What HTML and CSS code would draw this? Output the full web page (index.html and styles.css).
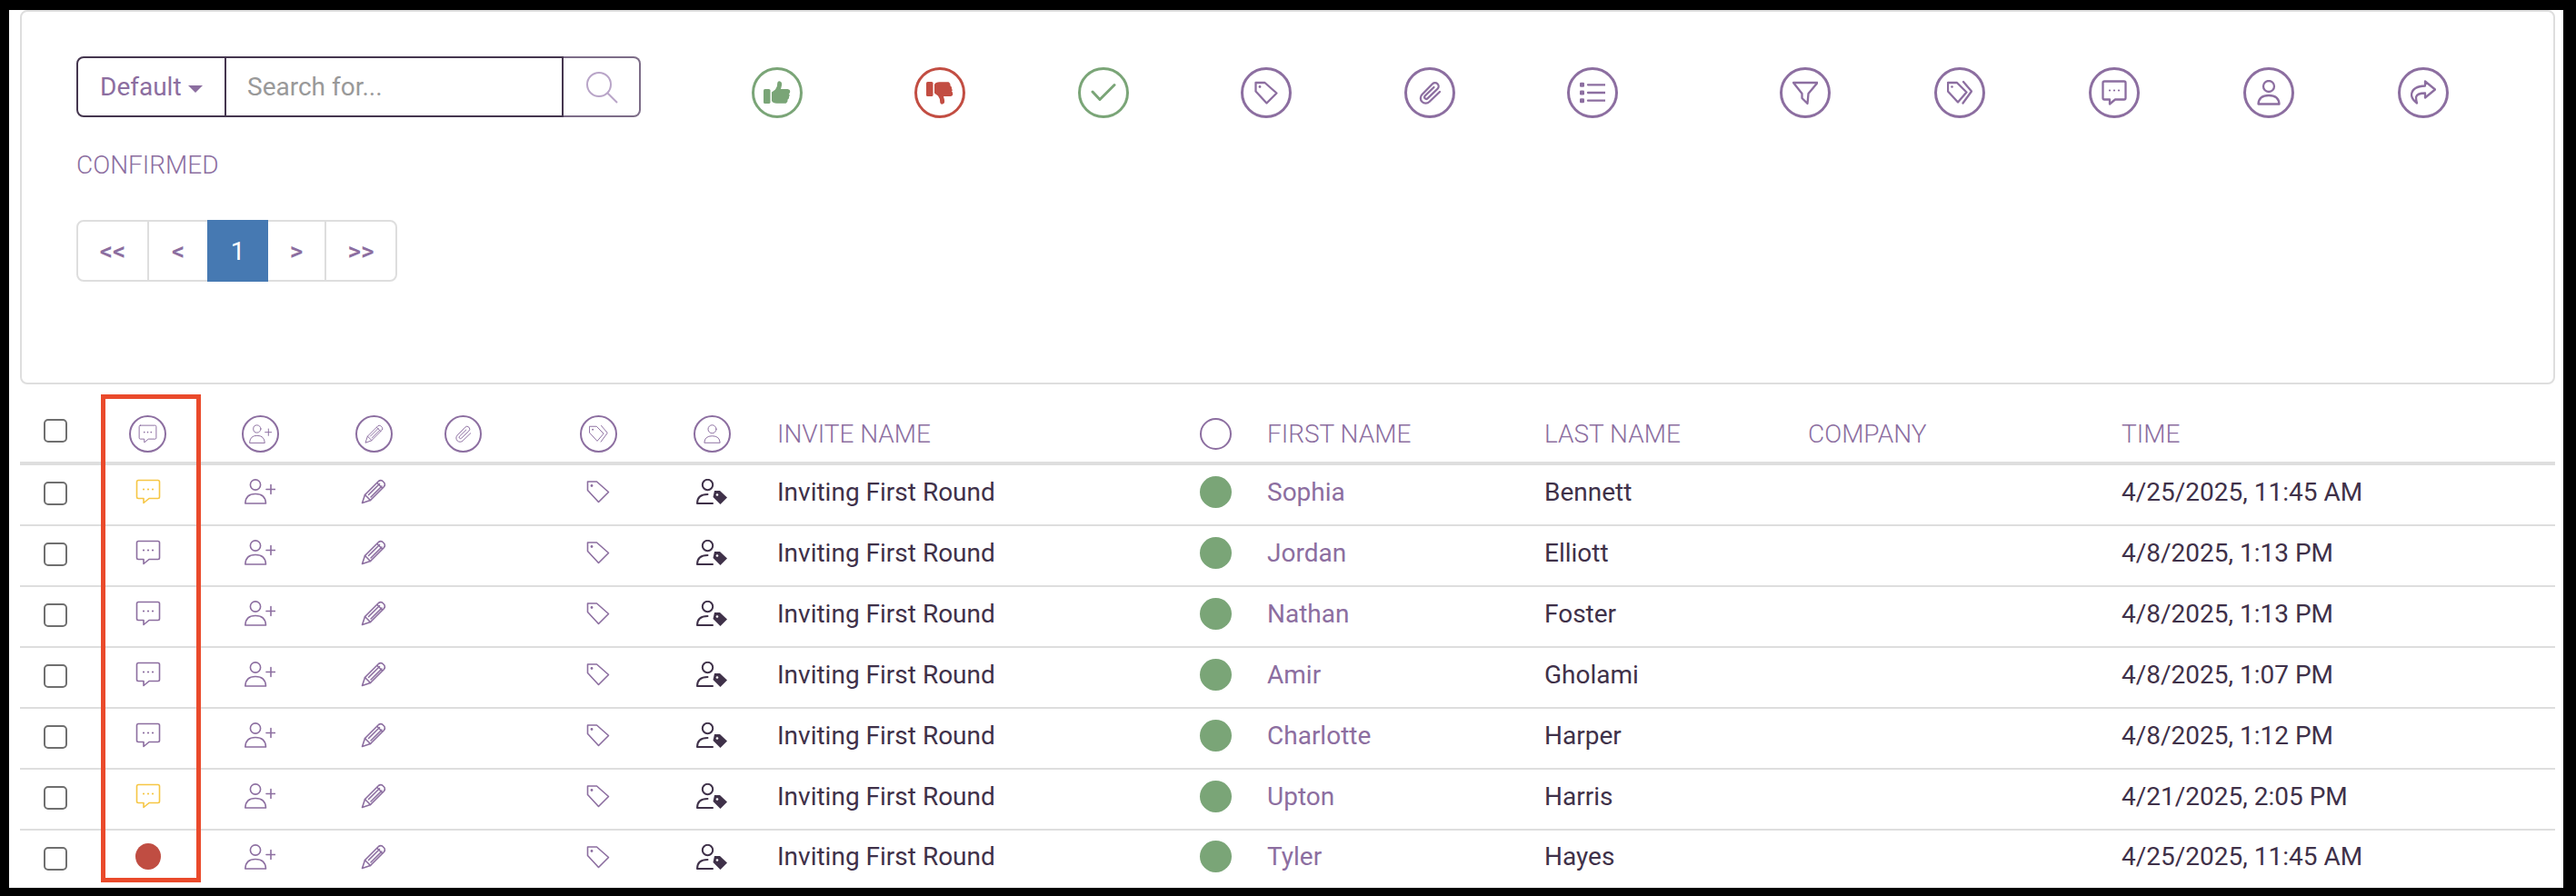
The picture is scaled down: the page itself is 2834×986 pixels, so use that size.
FILE: index.html
```html
<!DOCTYPE html>
<html lang="en">
<head>
<meta charset="utf-8">
<title>Confirmed invites</title>
<link rel="stylesheet" href="styles.css">
</head>
<body>
<svg class="defs" aria-hidden="true">
  <symbol id="i-thumb" viewBox="0 0 30 26"><rect class="f" x="0" y="9" width="7.5" height="16" rx="1.6"/><path class="f" d="M9 12.5 L13 9.5 Q15.5 6.5 15.3 2 Q15.8 0 18 .4 Q20.6 1 20 5 L19 9 H26.5 Q29.6 9.5 29.2 12 Q29.2 13.6 28 14.2 Q29.6 15.8 28 17.6 Q28.6 19.6 26.6 20.6 Q27 23.6 24.6 24.8 H14.5 Q10.3 24.8 9 22 Z"/></symbol>
  <symbol id="i-thumbdown" viewBox="0 0 30 26"><g transform="matrix(1 0 0 -1 0 26)"><rect class="f" x="0" y="9" width="7.5" height="16" rx="1.6"/><path class="f" d="M9 12.5 L13 9.5 Q15.5 6.5 15.3 2 Q15.8 0 18 .4 Q20.6 1 20 5 L19 9 H26.5 Q29.6 9.5 29.2 12 Q29.2 13.6 28 14.2 Q29.6 15.8 28 17.6 Q28.6 19.6 26.6 20.6 Q27 23.6 24.6 24.8 H14.5 Q10.3 24.8 9 22 Z"/></g></symbol>
  <symbol id="i-check" viewBox="0 0 28 28"><path d="M2 13 L10 21.5 L26 5.5"/></symbol>
  <symbol id="i-tag" viewBox="0 0 28 28"><path d="M2.5 3 H12.5 L25.5 14.5 L14.5 25.5 L2.5 12.5 Z"/><circle class="f" cx="7" cy="7.5" r="1.4"/></symbol>
  <symbol id="i-clip" viewBox="0 0 28 28"><path d="M25 13 L13.5 24 a5.6 5.6 0 0 1 -8 -8 L17 4.2 a3.8 3.8 0 0 1 5.5 5.5 L11.5 20.3 a1.9 1.9 0 0 1 -2.8 -2.8 L18.5 8"/></symbol>
  <symbol id="i-list" viewBox="0 0 28 28"><rect class="f" x="0" y="2.8" width="5" height="5" rx="1.2"/><rect class="f" x="0" y="11.5" width="5" height="5" rx="1.2"/><rect class="f" x="0" y="20.2" width="5" height="5" rx="1.2"/><path d="M9 5.3 H28 M9 14 H28 M9 22.7 H28"/></symbol>
  <symbol id="i-filter" viewBox="0 0 28 28"><path d="M1 3 H27.5 L17.5 15 L16.5 26 L10.5 20 V15 Z"/></symbol>
  <symbol id="i-tags" viewBox="0 0 28 28"><path d="M1 3 H11 L21.5 13.5 L12 24.5 L1 12.5 Z"/><circle class="f" cx="5.5" cy="7.5" r="1.3"/><path d="M18 2 L27 12.5 L17.5 25.5"/></symbol>
  <symbol id="i-comment" viewBox="0 0 28 28"><path d="M3.2 1.5 H24.8 Q26.5 1.5 26.5 3.2 V19.8 Q26.5 21.5 24.8 21.5 H15 L9 26.5 V21.5 H3.2 Q1.5 21.5 1.5 19.8 V3.2 Q1.5 1.5 3.2 1.5 Z"/><circle class="f" cx="9" cy="11.5" r="1.1"/><circle class="f" cx="14" cy="11.5" r="1.1"/><circle class="f" cx="19" cy="11.5" r="1.1"/></symbol>
  <symbol id="i-person" viewBox="0 0 28 28"><circle cx="14" cy="7" r="6"/><path d="M2.5 26.5 Q3 17 14 17 Q25 17 25.5 26.5 Z"/></symbol>
  <symbol id="i-share" viewBox="0 0 28 28"><path d="M16 1.5 L27 10.5 L16 19.5 V14.5 Q7 14.5 6 19 Q6 22 7 25.5 Q1 21 1 16 Q2 7 16 6.5 Z"/></symbol>
  <symbol id="i-personplus" viewBox="0 0 34 28"><circle cx="12" cy="6.5" r="5.6"/><path d="M.8 27 Q1.2 16.5 12 16.5 Q23 16.5 23.5 27 Z"/><path d="M24 11.5 H34 M29 6.5 V16.5"/></symbol>
  <symbol id="i-pencil" viewBox="0 0 28 28"><path d="M1.5 26.5 L4.5 17.5 L19.5 2.5 Q21.5 1 23.5 2 L26 4.5 Q27 6.5 25.5 8.5 L10.5 23.5 Z"/><path d="M4.5 17.5 L10.5 23.5 M8.5 17.5 L20.5 5.5 M11 20 L23 8 M18 4.5 L23.5 10"/></symbol>
  <symbol id="i-persontag" viewBox="0 0 34 28"><circle cx="12.5" cy="6.5" r="5.7"/><path d="M18 27 H1 Q1 17 12.5 17"/><path class="f" d="M20 13 H26 L34 20.5 L26.5 28 L18.5 20 Z"/><circle class="w" cx="23" cy="17.5" r="1.3"/></symbol>
</svg>

<div class="frame">
  <section class="card">
    <div class="toolbar">
      <div class="search">
        <button class="search-type" type="button">Default<span class="caret"></span></button>
        <input class="search-input" type="text" placeholder="Search for...">
        <button class="search-go" type="button" aria-label="Search">
          <svg class="search-ico" viewBox="0 0 36 36"><circle cx="15" cy="15" r="13"/><path d="M24.5 24.5 L35 35"/></svg>
        </button>
      </div>
      <div class="actions actions-a">
        <span class="ring ring-green"><svg class="glyph glyph-thumb"><use href="#i-thumb"/></svg></span>
        <span class="ring ring-red"><svg class="glyph glyph-thumb"><use href="#i-thumbdown"/></svg></span>
        <span class="ring ring-green"><svg class="glyph glyph-check"><use href="#i-check"/></svg></span>
        <span class="ring"><svg class="glyph"><use href="#i-tag"/></svg></span>
        <span class="ring"><svg class="glyph"><use href="#i-clip"/></svg></span>
        <span class="ring"><svg class="glyph"><use href="#i-list"/></svg></span>
      </div>
      <div class="actions actions-b">
        <span class="ring"><svg class="glyph"><use href="#i-filter"/></svg></span>
        <span class="ring"><svg class="glyph"><use href="#i-tags"/></svg></span>
        <span class="ring"><svg class="glyph"><use href="#i-comment"/></svg></span>
        <span class="ring"><svg class="glyph"><use href="#i-person"/></svg></span>
        <span class="ring"><svg class="glyph"><use href="#i-share"/></svg></span>
      </div>
    </div>
    <div class="status-label">CONFIRMED</div>
    <nav class="pager">
      <a class="page page-first">&lt;&lt;</a>
      <a class="page page-prev">&lt;</a>
      <a class="page page-current">1</a>
      <a class="page page-next">&gt;</a>
      <a class="page page-last">&gt;&gt;</a>
    </nav>
  </section>

  <section class="table">
    <div class="highlight"></div>
    <div class="row head">
      <div class="c c-check"><input class="check" type="checkbox"></div>
      <div class="c"><span class="ring ring-small"><svg class="mini"><use href="#i-comment"/></svg></span></div>
      <div class="c"><span class="ring ring-small"><svg class="mini mini-wide"><use href="#i-personplus"/></svg></span></div>
      <div class="c"><span class="ring ring-small"><svg class="mini"><use href="#i-pencil"/></svg></span></div>
      <div class="c"><span class="ring ring-small"><svg class="mini"><use href="#i-clip"/></svg></span></div>
      <div class="c"><span class="ring ring-small"><svg class="mini"><use href="#i-tags"/></svg></span></div>
      <div class="c"><span class="ring ring-small"><svg class="mini"><use href="#i-person"/></svg></span></div>
      <div class="c c-text c-invite">INVITE NAME</div>
      <div class="c"><span class="ring-empty"></span></div>
      <div class="c c-text c-first">FIRST NAME</div>
      <div class="c c-text">LAST NAME</div>
      <div class="c c-text">COMPANY</div>
      <div class="c c-text">TIME</div>
    </div>

    <div class="row">
      <div class="c c-check"><input class="check" type="checkbox"></div>
      <div class="c"><svg class="ico ico-yellow"><use href="#i-comment"/></svg></div>
      <div class="c"><svg class="ico ico-wide"><use href="#i-personplus"/></svg></div>
      <div class="c"><svg class="ico"><use href="#i-pencil"/></svg></div>
      <div class="c"></div>
      <div class="c"><svg class="ico"><use href="#i-tag"/></svg></div>
      <div class="c"><svg class="ico ico-wide ico-dark"><use href="#i-persontag"/></svg></div>
      <div class="c c-text c-invite">Inviting First Round</div>
      <div class="c"><span class="dot dot-green"></span></div>
      <div class="c c-text c-first"><a class="link">Sophia</a></div>
      <div class="c c-text">Bennett</div>
      <div class="c c-text"></div>
      <div class="c c-text">4/25/2025, 11:45 AM</div>
    </div>
    <div class="row">
      <div class="c c-check"><input class="check" type="checkbox"></div>
      <div class="c"><svg class="ico"><use href="#i-comment"/></svg></div>
      <div class="c"><svg class="ico ico-wide"><use href="#i-personplus"/></svg></div>
      <div class="c"><svg class="ico"><use href="#i-pencil"/></svg></div>
      <div class="c"></div>
      <div class="c"><svg class="ico"><use href="#i-tag"/></svg></div>
      <div class="c"><svg class="ico ico-wide ico-dark"><use href="#i-persontag"/></svg></div>
      <div class="c c-text c-invite">Inviting First Round</div>
      <div class="c"><span class="dot dot-green"></span></div>
      <div class="c c-text c-first"><a class="link">Jordan</a></div>
      <div class="c c-text">Elliott</div>
      <div class="c c-text"></div>
      <div class="c c-text">4/8/2025, 1:13 PM</div>
    </div>
    <div class="row">
      <div class="c c-check"><input class="check" type="checkbox"></div>
      <div class="c"><svg class="ico"><use href="#i-comment"/></svg></div>
      <div class="c"><svg class="ico ico-wide"><use href="#i-personplus"/></svg></div>
      <div class="c"><svg class="ico"><use href="#i-pencil"/></svg></div>
      <div class="c"></div>
      <div class="c"><svg class="ico"><use href="#i-tag"/></svg></div>
      <div class="c"><svg class="ico ico-wide ico-dark"><use href="#i-persontag"/></svg></div>
      <div class="c c-text c-invite">Inviting First Round</div>
      <div class="c"><span class="dot dot-green"></span></div>
      <div class="c c-text c-first"><a class="link">Nathan</a></div>
      <div class="c c-text">Foster</div>
      <div class="c c-text"></div>
      <div class="c c-text">4/8/2025, 1:13 PM</div>
    </div>
    <div class="row">
      <div class="c c-check"><input class="check" type="checkbox"></div>
      <div class="c"><svg class="ico"><use href="#i-comment"/></svg></div>
      <div class="c"><svg class="ico ico-wide"><use href="#i-personplus"/></svg></div>
      <div class="c"><svg class="ico"><use href="#i-pencil"/></svg></div>
      <div class="c"></div>
      <div class="c"><svg class="ico"><use href="#i-tag"/></svg></div>
      <div class="c"><svg class="ico ico-wide ico-dark"><use href="#i-persontag"/></svg></div>
      <div class="c c-text c-invite">Inviting First Round</div>
      <div class="c"><span class="dot dot-green"></span></div>
      <div class="c c-text c-first"><a class="link">Amir</a></div>
      <div class="c c-text">Gholami</div>
      <div class="c c-text"></div>
      <div class="c c-text">4/8/2025, 1:07 PM</div>
    </div>
    <div class="row">
      <div class="c c-check"><input class="check" type="checkbox"></div>
      <div class="c"><svg class="ico"><use href="#i-comment"/></svg></div>
      <div class="c"><svg class="ico ico-wide"><use href="#i-personplus"/></svg></div>
      <div class="c"><svg class="ico"><use href="#i-pencil"/></svg></div>
      <div class="c"></div>
      <div class="c"><svg class="ico"><use href="#i-tag"/></svg></div>
      <div class="c"><svg class="ico ico-wide ico-dark"><use href="#i-persontag"/></svg></div>
      <div class="c c-text c-invite">Inviting First Round</div>
      <div class="c"><span class="dot dot-green"></span></div>
      <div class="c c-text c-first"><a class="link">Charlotte</a></div>
      <div class="c c-text">Harper</div>
      <div class="c c-text"></div>
      <div class="c c-text">4/8/2025, 1:12 PM</div>
    </div>
    <div class="row">
      <div class="c c-check"><input class="check" type="checkbox"></div>
      <div class="c"><svg class="ico ico-yellow"><use href="#i-comment"/></svg></div>
      <div class="c"><svg class="ico ico-wide"><use href="#i-personplus"/></svg></div>
      <div class="c"><svg class="ico"><use href="#i-pencil"/></svg></div>
      <div class="c"></div>
      <div class="c"><svg class="ico"><use href="#i-tag"/></svg></div>
      <div class="c"><svg class="ico ico-wide ico-dark"><use href="#i-persontag"/></svg></div>
      <div class="c c-text c-invite">Inviting First Round</div>
      <div class="c"><span class="dot dot-green"></span></div>
      <div class="c c-text c-first"><a class="link">Upton</a></div>
      <div class="c c-text">Harris</div>
      <div class="c c-text"></div>
      <div class="c c-text">4/21/2025, 2:05 PM</div>
    </div>
    <div class="row row-last">
      <div class="c c-check"><input class="check" type="checkbox"></div>
      <div class="c"><span class="dot dot-red"></span></div>
      <div class="c"><svg class="ico ico-wide"><use href="#i-personplus"/></svg></div>
      <div class="c"><svg class="ico"><use href="#i-pencil"/></svg></div>
      <div class="c"></div>
      <div class="c"><svg class="ico"><use href="#i-tag"/></svg></div>
      <div class="c"><svg class="ico ico-wide ico-dark"><use href="#i-persontag"/></svg></div>
      <div class="c c-text c-invite">Inviting First Round</div>
      <div class="c"><span class="dot dot-green"></span></div>
      <div class="c c-text c-first"><a class="link">Tyler</a></div>
      <div class="c c-text">Hayes</div>
      <div class="c c-text"></div>
      <div class="c c-text">4/25/2025, 11:45 AM</div>
    </div>
  </section>
</div>
</body>
</html>
```

FILE: styles.css
```css
* { box-sizing: border-box; }

html, body {
  margin: 0;
  height: 986px;
  overflow: hidden;
  background: #000;
}

body {
  padding: 11px 14px 9px 10px;
  font-family: Roboto, "Liberation Sans", sans-serif;
  font-size: 28px;
  color: #3f3149;
}

.defs { display: none; }

.f { fill: currentColor; stroke: none; }
.w { fill: #fff; stroke: none; }

.frame {
  height: 966px;
  background: #fff;
  padding: 0 9px 0 12px;
  overflow: hidden;
}

/* top card */
.card {
  height: 412px;
  border: 2px solid #dedede;
  border-radius: 8px;
  padding: 49px 0 0 60px;
}

.toolbar {
  display: flex;
  align-items: flex-start;
}

.search {
  display: flex;
  width: 621px;
  height: 67px;
  flex: none;
}

.search-type {
  width: 165px;
  height: 100%;
  flex: none;
  display: flex;
  align-items: center;
  padding: 0 0 0 24px;
  background: #fff;
  border: 2px solid #45364f;
  border-radius: 8px 0 0 8px;
  color: #8c6ea0;
  font: 400 28px Roboto, sans-serif;
}

.caret {
  margin-left: 7px;
  margin-top: 4px;
  border-left: 8px solid transparent;
  border-right: 8px solid transparent;
  border-top: 8px solid #8c6ea0;
}

.search-input {
  flex: 1;
  min-width: 0;
  height: 100%;
  padding: 0 0 0 23px;
  border: 2px solid #45364f;
  border-left: 0;
  outline: 0;
  font: 400 28px Roboto, sans-serif;
  color: #999;
}

.search-input::placeholder { color: #999; opacity: 1; }

.search-go {
  width: 85px;
  height: 100%;
  flex: none;
  display: flex;
  align-items: center;
  justify-content: center;
  padding: 0;
  background: #fff;
  border: 2px solid #7d6d88;
  border-left: 0;
  border-radius: 0 8px 8px 0;
}

.search-ico {
  width: 36px;
  height: 36px;
  fill: none;
  stroke: #b9a5c8;
  stroke-width: 2;
}

.actions {
  display: flex;
  margin-top: 12px;
  flex: none;
}

.actions-a { gap: 123.4px; margin-left: 122px; }
.actions-b { gap: 114px; margin-left: 178px; }

.ring {
  width: 56px;
  height: 56px;
  flex: none;
  display: flex;
  align-items: center;
  justify-content: center;
  border: 3.5px solid #8c6ea0;
  border-radius: 50%;
  color: #8c6ea0;
}

.ring-green { border-color: #7aa577; color: #7aa577; }
.ring-red { border-color: #c24d42; color: #c24d42; }

.ring-small { width: 41px; height: 41px; border-width: 2.5px; }

.glyph {
  width: 28px;
  height: 28px;
  fill: none;
  stroke: currentColor;
  stroke-width: 2.3;
  stroke-linejoin: round;
  stroke-linecap: round;
}

.glyph-thumb { width: 30px; height: 26px; }
.glyph-check { stroke-width: 3; }

.mini {
  width: 21px;
  height: 21px;
  fill: none;
  stroke: currentColor;
  stroke-width: 1.3;
  stroke-linejoin: round;
  stroke-linecap: round;
}

.mini-wide { width: 25px; }

.status-label {
  margin-top: 36px;
  height: 32px;
  line-height: 32px;
  font-weight: 300;
  font-size: 28px;
  color: #8c6ea0;
}

/* pagination */
.pager {
  display: flex;
  width: 353px;
  height: 68px;
  margin-top: 44px;
  border: 2px solid #dedede;
  border-radius: 8px;
}

.page {
  display: flex;
  align-items: center;
  justify-content: center;
  margin: -2px 0;
  color: #8c6ea0;
  font-weight: 500;
  font-size: 28px;
}

.page-first { width: 78px; border-right: 2px solid #dedede; }
.page-prev { width: 64px; }
.page-current { width: 67px; background: #4679b2; color: #fff; font-weight: 400; }
.page-next { width: 64px; border-right: 2px solid #dedede; }
.page-last { flex: 1; }

/* table */
.table {
  position: relative;
  margin-top: 11px;
}

.highlight {
  position: absolute;
  left: 89px;
  top: 0;
  width: 110px;
  height: 537px;
  border: 5px solid #ea4a2b;
  pointer-events: none;
  z-index: 1;
}

.row {
  display: grid;
  grid-template-columns: 89px 103px 144px 106px 90px 208px 42px 508px 50px 337px 290px 345px 1fr;
  align-items: center;
  height: 67px;
  padding-bottom: 7px;
  border-bottom: 2px solid #dedede;
}

.row-last { height: 64px; border-bottom: 0; }

.head {
  height: 78px;
  padding: 12px 0 0;
  border-bottom: 4px solid #dedede;
  font-weight: 300;
  color: #8c6ea0;
}

.c {
  display: flex;
  align-items: center;
  justify-content: center;
  min-width: 0;
}

.c-text { justify-content: flex-start; white-space: nowrap; }
.c-check { justify-content: flex-start; padding-left: 26px; }
.c-invite { padding-left: 51px; }
.c-first { padding-left: 32px; }

.head .c-check { margin-top: -7px; }
.row:not(.head) .c-check { margin-top: 4px; }

.check {
  appearance: none;
  width: 26px;
  height: 26px;
  margin: 0;
  background: #fff;
  border: 2px solid #6f6f6f;
  border-radius: 5px;
}

.ico {
  width: 28px;
  height: 28px;
  fill: none;
  stroke: #8c6ea0;
  color: #8c6ea0;
  stroke-width: 1.6;
  stroke-linejoin: round;
  stroke-linecap: round;
}

.ico-wide { width: 34px; }
.ico-yellow { stroke: #f6c644; color: #f6c644; }
.ico-dark { stroke: #3f3149; color: #3f3149; stroke-width: 2; }

.ring-empty {
  width: 35px;
  height: 35px;
  border: 2.5px solid #8c6ea0;
  border-radius: 50%;
}

.dot {
  display: block;
  border-radius: 50%;
}

.dot-green { width: 35px; height: 35px; background: #7aa577; }
.dot-red { width: 28px; height: 29px; background: #c04d42; }

.link { color: #8c6ea0; }
```
